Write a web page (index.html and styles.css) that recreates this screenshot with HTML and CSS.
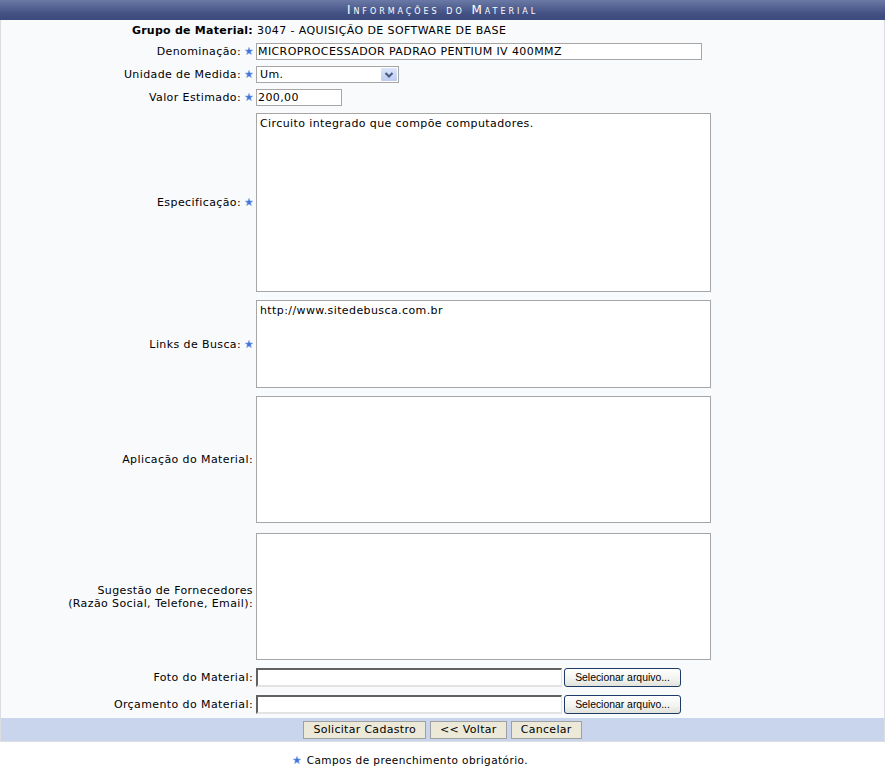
FILE: index.html
```html
<!DOCTYPE html>
<html lang="pt">
<head>
<meta charset="utf-8">
<title>Informações do Material</title>
<link rel="stylesheet" href="styles.css">
</head>
<body>
<div class="form">
  <div class="caption">Informações do Material</div>
  <div class="body">
    <div class="row row-group">
      <div class="lbl lbl-bold">Grupo de Material:</div>
      <div class="val">3047 - AQUISIÇÃO DE SOFTWARE DE BASE</div>
    </div>
    <div class="row row-input">
      <div class="lbl">Denominação: <svg class="star" viewBox="0 0 10 10"><polygon points="5,0.3 6.3,3.6 9.8,3.8 7.1,6 8,9.6 5,7.6 2,9.6 2.9,6 0.2,3.8 3.7,3.6"/></svg></div>
      <div class="val"><input class="txt txt-long" type="text" value="MICROPROCESSADOR PADRAO PENTIUM IV 400MMZ"></div>
    </div>
    <div class="row row-input">
      <div class="lbl">Unidade de Medida: <svg class="star" viewBox="0 0 10 10"><polygon points="5,0.3 6.3,3.6 9.8,3.8 7.1,6 8,9.6 5,7.6 2,9.6 2.9,6 0.2,3.8 3.7,3.6"/></svg></div>
      <div class="val">
        <div class="select"><span class="select-text">Um.</span><span class="select-btn"><svg viewBox="0 0 16 14" width="16" height="14"><path d="M4.5 5 L8 8.5 L11.5 5" fill="none" stroke="#4a5d86" stroke-width="2.2"/></svg></span></div>
      </div>
    </div>
    <div class="row row-input">
      <div class="lbl">Valor Estimado: <svg class="star" viewBox="0 0 10 10"><polygon points="5,0.3 6.3,3.6 9.8,3.8 7.1,6 8,9.6 5,7.6 2,9.6 2.9,6 0.2,3.8 3.7,3.6"/></svg></div>
      <div class="val"><input class="txt txt-short" type="text" value="200,00"></div>
    </div>
    <div class="row row-area">
      <div class="lbl">Especificação: <svg class="star" viewBox="0 0 10 10"><polygon points="5,0.3 6.3,3.6 9.8,3.8 7.1,6 8,9.6 5,7.6 2,9.6 2.9,6 0.2,3.8 3.7,3.6"/></svg></div>
      <div class="val"><textarea class="area area-spec">Circuito integrado que compõe computadores.</textarea></div>
    </div>
    <div class="row row-area">
      <div class="lbl">Links de Busca: <svg class="star" viewBox="0 0 10 10"><polygon points="5,0.3 6.3,3.6 9.8,3.8 7.1,6 8,9.6 5,7.6 2,9.6 2.9,6 0.2,3.8 3.7,3.6"/></svg></div>
      <div class="val"><textarea class="area area-links">http://www.sitedebusca.com.br</textarea></div>
    </div>
    <div class="row row-area">
      <div class="lbl">Aplicação do Material:</div>
      <div class="val"><textarea class="area area-big"></textarea></div>
    </div>
    <div class="row row-area row-sug">
      <div class="lbl">Sugestão de Fornecedores<br>(Razão Social, Telefone, Email):</div>
      <div class="val"><textarea class="area area-big"></textarea></div>
    </div>
    <div class="row row-file">
      <div class="lbl">Foto do Material:</div>
      <div class="val file"><span class="file-box"></span><span class="file-btn">Selecionar arquivo...</span></div>
    </div>
    <div class="row row-file">
      <div class="lbl">Orçamento do Material:</div>
      <div class="val file"><span class="file-box"></span><span class="file-btn">Selecionar arquivo...</span></div>
    </div>
  </div>
  <div class="foot">
    <button class="btn" type="button">Solicitar Cadastro</button>
    <button class="btn" type="button">&lt;&lt; Voltar</button>
    <button class="btn" type="button">Cancelar</button>
  </div>
</div>
<p class="note"><svg class="star" viewBox="0 0 10 10"><polygon points="5,0.3 6.3,3.6 9.8,3.8 7.1,6 8,9.6 5,7.6 2,9.6 2.9,6 0.2,3.8 3.7,3.6"/></svg> Campos de preenchimento obrigatório.</p>
</body>
</html>
```

FILE: styles.css
```css
html, body {
  margin: 0;
  padding: 0;
  background: #ffffff;
}
body {
  font-family: "DejaVu Sans", Verdana, sans-serif;
  font-size: 11px;
  letter-spacing: 0.4px;
  color: #000;
}
.form {
  width: 885px;
  box-sizing: border-box;
  border-left: 1px solid #dcdde0;
  border-right: 1px solid #dcdde0;
  border-bottom: 1px solid #dcdde0;
  background: #f9fafc;
}
.caption {
  height: 20px;
  line-height: 20px;
  background: linear-gradient(#6b79a6, #414f82 70%, #3d4a7c);
  color: #fff;
  text-align: center;
  font-variant: small-caps;
  letter-spacing: 2.95px;
  font-size: 12px;
  font-weight: normal;
  margin: 0 -1px;
}
.row {
  display: grid;
  grid-template-columns: 252px 1fr;
  column-gap: 3px;
  align-items: center;
}
.lbl {
  text-align: right;
  line-height: 13px;
}
.lbl-bold {
  font-weight: bold;
  letter-spacing: 0.25px;
}
.star {
  width: 8px;
  height: 8px;
  fill: #3f74dc;
  stroke: #86a8ec;
  stroke-width: 0.6;
  vertical-align: 0px;
}
.row-group {
  height: 20px;
}
.row-group .val {
  padding-left: 1px;
}
.row-input {
  padding: 3px 0;
}
.row-area {
  padding: 4px 0;
}
.row-sug {
  padding-top: 6px;
}
.row-file {
  padding: 4px 0;
}
.val {
  display: flex;
  align-items: center;
}
.txt {
  box-sizing: border-box;
  height: 17px;
  border: 1px solid #a6a6a6;
  background: #fff;
  padding: 0 1px;
  margin: 0;
  font-family: "DejaVu Sans", Verdana, sans-serif;
  font-size: 11px;
  letter-spacing: 0.4px;
  color: #000;
  outline: none;
}
.txt-long {
  width: 446px;
}
.txt-short {
  width: 86px;
}
.select {
  box-sizing: border-box;
  width: 143px;
  height: 17px;
  border: 1px solid #a6a6a6;
  background: #fff;
  display: flex;
  align-items: center;
  justify-content: space-between;
}
.select-text {
  padding-left: 3px;
}
.select-btn {
  width: 16px;
  height: 13px;
  margin-right: 1px;
  background: linear-gradient(#dde6fa, #bccbef);
  border-radius: 1px;
  display: flex;
  align-items: center;
  justify-content: center;
}
.area {
  box-sizing: border-box;
  width: 455px;
  border: 1px solid #a6a6a6;
  background: #fff;
  padding: 3px 3px;
  margin: 0;
  font-family: "DejaVu Sans", Verdana, sans-serif;
  font-size: 11px;
  letter-spacing: 0.4px;
  line-height: 13px;
  color: #000;
  resize: none;
  overflow: hidden;
  display: block;
}
.area-spec {
  height: 179px;
}
.area-links {
  height: 88px;
}
.area-big {
  height: 127px;
}
.file {
  gap: 2px;
}
.file-box {
  box-sizing: border-box;
  width: 306px;
  height: 19px;
  background: #fff;
  border-top: 2px solid #616161;
  border-left: 2px solid #616161;
  border-bottom: 2px solid #e3e3e3;
  border-right: 1px solid #e3e3e3;
}
.file-btn {
  box-sizing: border-box;
  width: 117px;
  height: 19px;
  border: 1px solid #1d3b68;
  border-radius: 3px;
  background: linear-gradient(#ffffff, #f2f2ee 60%, #e2e2dc);
  font-family: "Liberation Sans", Arial, sans-serif;
  font-size: 10.4px;
  letter-spacing: 0;
  line-height: 17px;
  text-align: center;
  color: #000;
}
.foot {
  height: 23px;
  background: #c8d5ec;
  display: flex;
  justify-content: center;
  align-items: center;
  gap: 4px;
}
.btn {
  box-sizing: border-box;
  height: 18px;
  padding: 0 9px;
  margin: 0;
  border: 1px solid #a0a0a0;
  background: #ece9d8;
  font-family: "DejaVu Sans", Verdana, sans-serif;
  font-size: 11px;
  letter-spacing: 0.3px;
  color: #000;
  line-height: 16px;
}
.note {
  margin: 12px 0 0;
  padding-left: 293px;
  font-size: 10.5px;
  letter-spacing: 0.42px;
  line-height: 13px;
}
.note .star {
  margin-right: 2px;
}
```
